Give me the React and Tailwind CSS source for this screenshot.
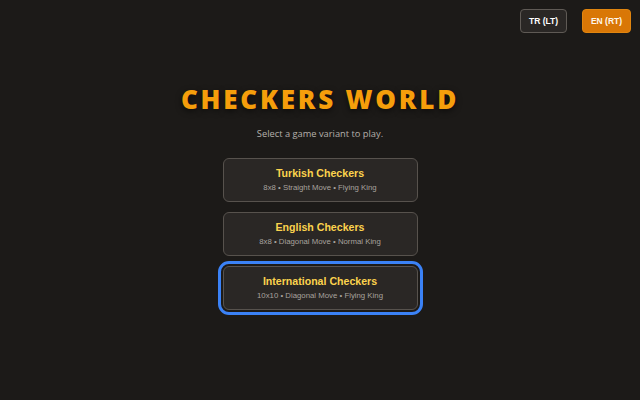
import React, { useState } from 'react';

const variants = [
    { id: 'tr', name: 'Turkish Checkers', info: '8x8 • Straight Move • Flying King' },
    { id: 'en', name: 'English Checkers', info: '8x8 • Diagonal Move • Normal King' },
    { id: 'intl', name: 'International Checkers', info: '10x10 • Diagonal Move • Flying King' },
];

const App = () => {
    const [lang, setLang] = useState('en');
    const [focused, setFocused] = useState('intl');

    return (
        <div className="relative flex h-screen w-full flex-col items-center justify-center bg-[#1c1a18]">
            {/* Language switch */}
            <div className="absolute right-[9px] top-[9px] flex gap-[15px] font-['Liberation_Sans',Arial,sans-serif]">
                <button
                    onClick={() => setLang('tr')}
                    className={`h-[24px] w-[47px] rounded-[4px] border text-[8.5px] font-bold text-white ${lang === 'tr' ? 'border-[#e0850f] bg-[#d97706]' : 'border-[#5f5a55] bg-[#2a2725]'}`}
                >
                    TR (LT)
                </button>
                <button
                    onClick={() => setLang('en')}
                    className={`h-[24px] w-[49px] rounded-[4px] border text-[8.5px] font-bold text-[#fdf6ec] ${lang === 'en' ? 'border-[#e0850f] bg-[#d97706]' : 'border-[#5f5a55] bg-[#2a2725]'}`}
                >
                    EN (RT)
                </button>
            </div>

            {/* Title */}
            <h1 className="font-['Open_Sans',sans-serif] text-[26px] font-extrabold leading-[18px] tracking-[2.8px] text-[#f59e0b] [text-shadow:0_2px_6px_rgba(0,0,0,0.6)]">
                CHECKERS WORLD
            </h1>
            <p className="mt-[19px] font-['Open_Sans',sans-serif] text-[9.3px] text-[#b5b0ab]">
                Select a game variant to play.
            </p>

            {/* Variants */}
            <div className="mt-[17px] flex flex-col gap-[10px] font-['Liberation_Sans',Arial,sans-serif]">
                {variants.map((v) => (
                    <button
                        key={v.id}
                        onClick={() => setFocused(v.id)}
                        className={`flex h-[44px] w-[195px] flex-col items-center justify-center rounded-[6px] border border-[#57524d] bg-[#2a2725] ${focused === v.id ? 'outline-[3px] outline-offset-[2px] outline-[#3b82f6] outline-solid' : ''}`}
                    >
                        <span className="text-[10.6px] font-bold leading-[13px] text-[#fcd34d]">{v.name}</span>
                        <span className="mt-[3px] text-[7.8px] leading-[10px] text-[#a8a29e]">{v.info}</span>
                    </button>
                ))}
            </div>
        </div>
    );
};

export default App;
